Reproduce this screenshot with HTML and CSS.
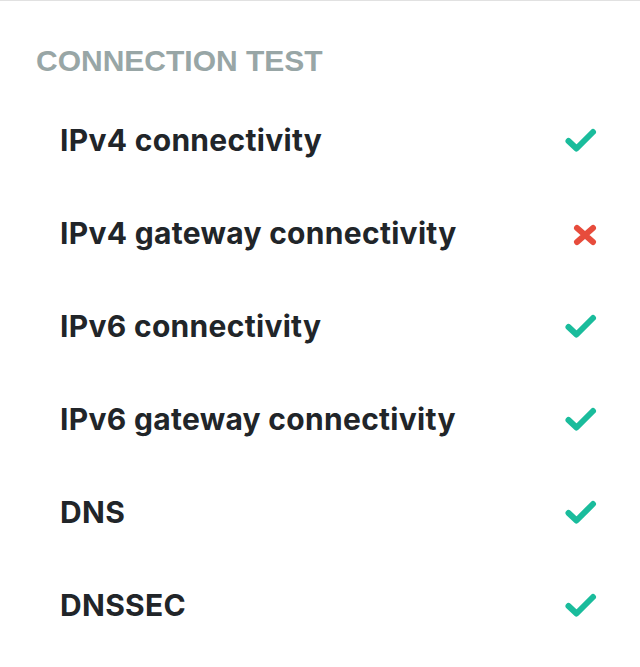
FILE: index.html
```html
<!DOCTYPE html>
<html lang="en">
<head>
    <meta charset="UTF-8">
    <meta name="viewport" content="width=device-width, initial-scale=1.0">
    <title>Connection Test</title>
    <link rel="stylesheet" href="styles.css">
</head>
<body>
    <div class="panel">
        <h2 class="title">Connection test</h2>
        <ul class="tests">
            <li class="test">
                <span class="name">IPv4 connectivity</span>
                <svg class="icon ok" viewBox="0 0 30 24"><path d="M1.5 13l8 7.5L26 4"/></svg>
            </li>
            <li class="test">
                <span class="name">IPv4 gateway connectivity</span>
                <svg class="icon fail" viewBox="0 0 30 24"><path d="M10 7l16 14M26 7L10 21"/></svg>
            </li>
            <li class="test">
                <span class="name">IPv6 connectivity</span>
                <svg class="icon ok" viewBox="0 0 30 24"><path d="M1.5 13l8 7.5L26 4"/></svg>
            </li>
            <li class="test">
                <span class="name">IPv6 gateway connectivity</span>
                <svg class="icon ok" viewBox="0 0 30 24"><path d="M1.5 13l8 7.5L26 4"/></svg>
            </li>
            <li class="test">
                <span class="name">DNS</span>
                <svg class="icon ok" viewBox="0 0 30 24"><path d="M1.5 13l8 7.5L26 4"/></svg>
            </li>
            <li class="test">
                <span class="name">DNSSEC</span>
                <svg class="icon ok" viewBox="0 0 30 24"><path d="M1.5 13l8 7.5L26 4"/></svg>
            </li>
        </ul>
    </div>
</body>
</html>
```
FILE: styles.css
```css
body {
    margin: 0;
    background-color: white;
    font-family: Inter, "Liberation Sans", sans-serif;
}
.panel {
    border-top: 1px solid #e1e1e1;
    padding: 0 43px 0 36px;
}
.title {
    margin: 42px 0 0 0;
    font-family: "Liberation Sans", Arial, sans-serif;
    font-size: 30px;
    font-weight: bold;
    text-transform: uppercase;
    color: #98a6a6;
    line-height: 36px;
}
.tests {
    list-style: none;
    margin: 14px 0 0 0;
    padding: 0 0 0 24px;
}
.test {
    display: flex;
    justify-content: space-between;
    align-items: center;
    height: 93px;
}
.name {
    font-size: 30px;
    font-weight: bold;
    letter-spacing: 0.3px;
    color: #212529;
}
.icon {
    width: 30px;
    height: 24px;
    overflow: visible;
    fill: none;
    stroke-width: 6;
    stroke-linecap: round;
    stroke-linejoin: round;
}
.ok {
    stroke: #1abc9c;
}
.fail {
    stroke: #e74c3c;
}
```
